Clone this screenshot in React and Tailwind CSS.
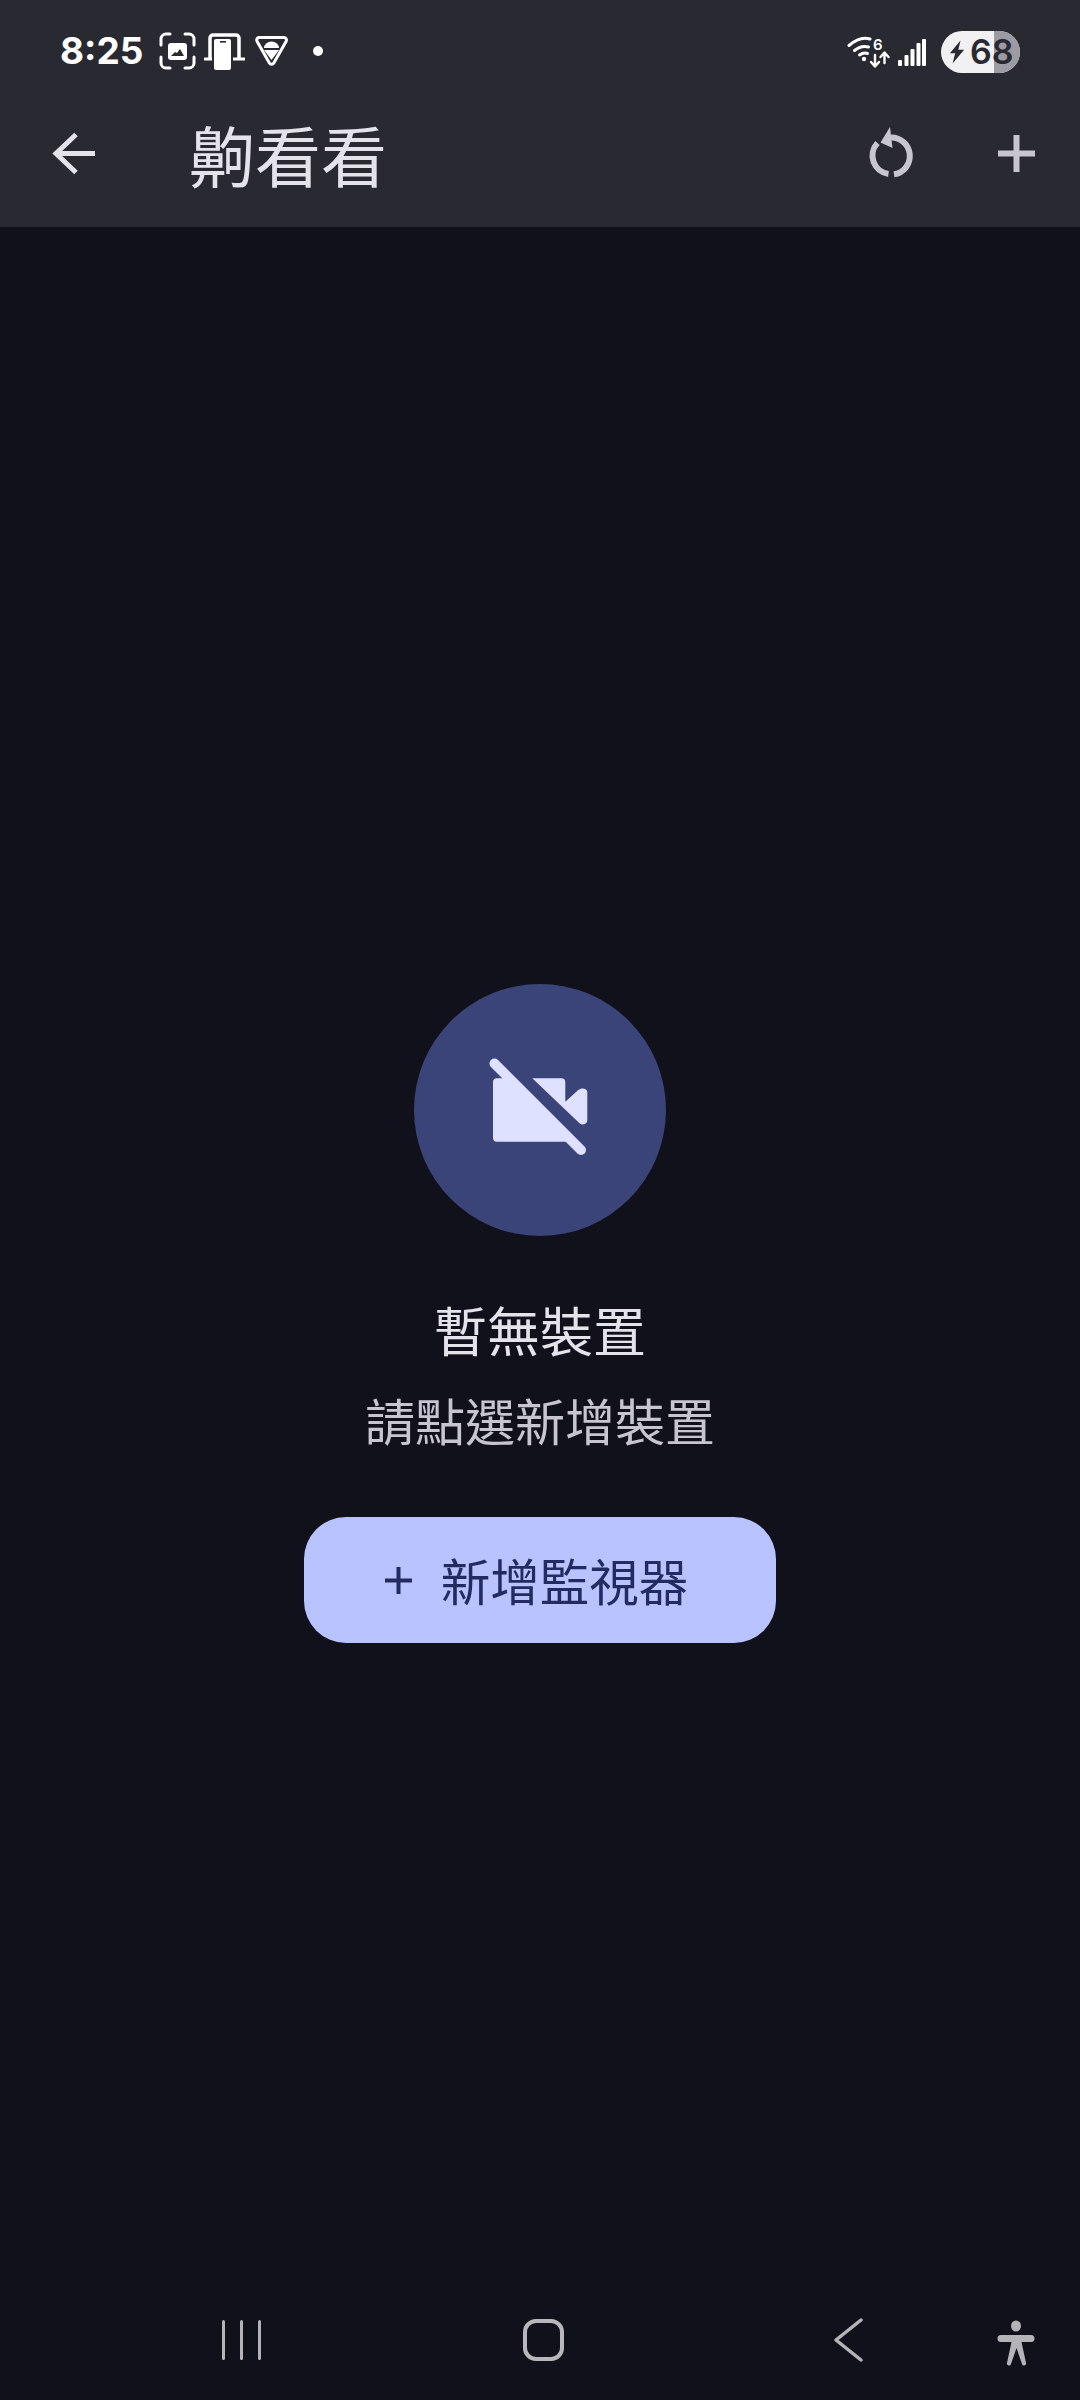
const cjk = { fontFamily: '"Noto Sans CJK TC", "Noto Sans CJK SC", sans-serif' };

function Svg({ x, y, w, h, className = "", children }) {
  return (
    <svg width={w} height={h} viewBox={`${x} ${y} ${w} ${h}`} className={`block shrink-0 ${className}`} fill="none">
      {children}
    </svg>
  );
}

function FocusImage() {
  return (
    <Svg x={158} y={32} w={39} h={38}>
      <g stroke="#fff" strokeWidth="3" strokeLinecap="round">
        <path d="M161 45v-6a5 5 0 0 1 5-5h4" />
        <path d="M185 34h4a5 5 0 0 1 5 5v6" />
        <path d="M194 57v6a5 5 0 0 1-5 5h-4" />
        <path d="M170 68h-4a5 5 0 0 1-5-5v-6" />
      </g>
      <rect x="168" y="43" width="19" height="17" rx="3" fill="#fff" />
      <path d="M171 56l4-4 2 1 3-4 4 7z" fill="#282931" />
    </Svg>
  );
}

function PhoneLaptop() {
  return (
    <Svg x={204} y={33} w={41} h={39}>
      <path d="M210 59V39a3 3 0 0 1 3-3h23a3 3 0 0 1 3 3v20" stroke="#fff" strokeWidth="3.5" />
      <path d="M205 60h39" stroke="#fff" strokeWidth="3" strokeLinecap="round" />
      <rect x="212" y="38" width="21" height="35" rx="3" fill="#282931" />
      <rect x="214" y="40" width="17" height="31" rx="2" fill="#fff" />
      <rect x="220" y="42" width="6" height="1.6" fill="#282931" />
    </Svg>
  );
}

function AndroidTriangle() {
  return (
    <Svg x={254} y={36} w={35} h={32}>
      <path d="M259 38.500h25a2.500 2.500 0 0 1 2.200 3.700L273.800 64a2.500 2.500 0 0 1-4.400 0L257 42.200a2.500 2.500 0 0 1 2-3.700z" stroke="#fff" strokeWidth="3" strokeLinejoin="round" />
      <path d="M264 49a7.500 6.500 0 0 1 15 0z" fill="#fff" />
      <path d="M264 51h15l-7.500 10z" fill="#fff" />
    </Svg>
  );
}

function Wifi() {
  return (
    <Svg x={846} y={34} w={44} h={34}>
      <g stroke="#fff" strokeWidth="3" strokeLinecap="round">
        <path d="M849 44.500c8-7 15-8.500 21-6.500" />
        <path d="M854.500 49.500c5-4 9-5 14-3.500" />
        <path d="M859.500 54c3-2 5-2.500 8-1.500" />
      </g>
      <circle cx="864" cy="58" r="2.200" fill="#fff" />
      <text x="873" y="49" fill="#fff" fontSize="15" fontWeight="600" fontFamily="Inter, sans-serif">6</text>
      <path d="M875 54v11M871 61l4 4.500 4-4.500" stroke="#fff" strokeWidth="2.400" strokeLinecap="round" strokeLinejoin="round" />
      <path d="M884.500 62V52M880.500 56l4-4.500 4 4.500" stroke="#fff" strokeWidth="2.400" strokeLinecap="round" strokeLinejoin="round" />
    </Svg>
  );
}

function Signal() {
  return (
    <Svg x={897} y={36} w={30} h={29}>
      <rect x="898" y="58" width="4" height="6" rx="1" fill="#fff" />
      <rect x="904.500" y="53" width="4" height="11" rx="1" fill="#fff" />
      <rect x="910.500" y="47" width="4" height="17" rx="1" fill="#fff" />
      <rect x="916.500" y="41" width="4" height="23" rx="1" fill="#fff" />
      <rect x="922" y="37" width="4" height="27" rx="1" fill="#fff" />
    </Svg>
  );
}

function Battery() {
  return (
    <div className="relative flex h-[42px] w-[79px] shrink-0 items-center overflow-hidden rounded-full bg-[#f1f1f3]">
      <div className="absolute inset-y-0 right-0 w-[26px] bg-[#9b9ba1]" />
      <svg width="16" height="26" viewBox="0 0 18 26" className="relative ml-[8px] shrink-0">
        <path d="M13 0L1 14.500h6L4 26 17 10.500h-6.500z" fill="#282931" />
      </svg>
      <span className="relative ml-[5px] text-[34px] leading-none font-semibold text-[#282931]" style={{ fontFamily: "Inter, sans-serif" }}>
        68
      </span>
    </div>
  );
}

function BackArrow() {
  return (
    <Svg x={50} y={130} w={48} h={47}>
      <path d="M95 153.500H56M76 134.500L56 153.500l20 19" stroke="#e4e3ea" strokeWidth="5" />
    </Svg>
  );
}

function Refresh() {
  return (
    <Svg x={866} y={124} w={50} h={56}>
      <path d="M877.500 143a18.500 18.500 0 0 0 11 31" stroke="#c6c5d0" strokeWidth="6" />
      <path d="M894 174.300A18.500 18.500 0 0 0 891 137.500" stroke="#c6c5d0" strokeWidth="6" />
      <path d="M890 127l-9.500 15.500 12 5.500z" fill="#c6c5d0" />
    </Svg>
  );
}

function Plus({ size, sw, color }) {
  const c = size / 2;
  return (
    <svg width={size} height={size} viewBox={`0 0 ${size} ${size}`} className="block shrink-0">
      <path d={`M${c} 0V${size}M0 ${c}H${size}`} stroke={color} strokeWidth={sw} />
    </svg>
  );
}

function VideoOff() {
  return (
    <Svg x={480} y={1050} w={120} h={120}>
      <path d="M532.300 1078.300H561.300a4 4 0 0 1 4 4v19.400l13-11.600c3-2.600 9-2 9 2.200v27.700c0 4.300-5 5.500-7.500 3.500z" fill="#dee1ff" />
      <path d="M497 1078.300h12.500L572.500 1141.700h-75.500a4 4 0 0 1-4-4v-55.400a4 4 0 0 1 4-4z" fill="#dee1ff" />
      <path d="M494.500 1063.500L581 1150" stroke="#dee1ff" strokeWidth="10" strokeLinecap="round" />
    </Svg>
  );
}

function Accessibility() {
  return (
    <Svg x={996} y={2318} w={40} h={50}>
      <ellipse cx="1016" cy="2326" rx="5" ry="5.500" fill="#b4b4b8" />
      <path d="M1001 2335h30a2.300 2.300 0 0 1 0 7h-9.500l4.500 21a2 2 0 0 1-4 1l-5.500-16-5.500 16a2 2 0 0 1-4-1l4.500-21H1001a2.300 2.300 0 0 1 0-7z" fill="#b4b4b8" />
    </Svg>
  );
}

export default function App() {
  return (
    <div className="flex h-[2400px] w-[1080px] flex-col overflow-hidden bg-[#10111b]" style={cjk}>
      <header className="h-[227px] shrink-0 bg-[#282931]">
        <div className="flex h-[100px] items-start justify-between pt-[31px] pr-[60px] pl-[60px]">
          <div className="flex items-center">
            <span className="w-[98px] text-[37px] leading-[40px] font-bold text-white" style={{ fontFamily: "Inter, sans-serif" }}>
              8:25
            </span>
            <FocusImage />
            <div className="ml-[7px]"><PhoneLaptop /></div>
            <div className="ml-[9px]"><AndroidTriangle /></div>
            <div className="ml-[24px] size-[10px] rounded-full bg-white" />
          </div>
          <div className="flex items-center">
            <Wifi />
            <div className="ml-[7px]"><Signal /></div>
            <div className="ml-[14px]"><Battery /></div>
          </div>
        </div>
        <div className="flex h-[127px] items-start pt-[30px]">
          <div className="ml-[50px]"><BackArrow /></div>
          <h1 className="ml-[91px] -mt-[24px] text-[66px] leading-[94px] font-normal text-[#e4e3ea]">
            齁看看
          </h1>
          <div className="ml-auto -mt-[6px]"><Refresh /></div>
          <div className="mr-[45px] ml-[82px] mt-[5px]"><Plus size={37} sw={6} color="#c6c5d0" /></div>
        </div>
      </header>

      <main className="flex flex-1 flex-col items-center pt-[757px]">
        <div className="flex size-[252px] items-center justify-center rounded-full bg-[#3a4478]">
          <VideoOff />
        </div>
        <h2 className="mt-[55px] text-[53px] leading-[76px] font-normal text-[#e4e3ea]">暫無裝置</h2>
        <p className="mt-[17px] text-[50px] leading-[71px] text-[#c6c5d0]">請點選新增裝置</p>
        <button className="mt-[62px] flex h-[126px] w-[472px] items-center justify-center rounded-[42px] bg-[#b9c3ff] text-[49.5px] text-[#232c60]">
          <Plus size={27} sw={4} color="#232c60" />
          <span className="ml-[29px] mr-[7px] leading-none">新增監視器</span>
        </button>
      </main>

      <nav className="flex h-[100px] shrink-0 items-start pt-[20px]">
        <div className="ml-[222px] flex h-[40px] gap-[15px]">
          <div className="w-[3px] rounded-full bg-[#b4b4b8]" />
          <div className="w-[3px] rounded-full bg-[#b4b4b8]" />
          <div className="w-[3px] rounded-full bg-[#b4b4b8]" />
        </div>
        <div className="ml-[262px] -mt-[1px] h-[42px] w-[41px] rounded-[13px] border-[4px] border-[#b8b8bc]" />
        <div className="ml-[269px] -mt-[2px]">
          <svg width="30" height="44" viewBox="0 0 30 44" className="block">
            <path d="M28 2L3 22l25 20" stroke="#b4b4b8" strokeWidth="3.500" fill="none" strokeLinecap="round" strokeLinejoin="round" />
          </svg>
        </div>
        <div className="ml-[133px] -mt-[2px]"><Accessibility /></div>
      </nav>
    </div>
  );
}
